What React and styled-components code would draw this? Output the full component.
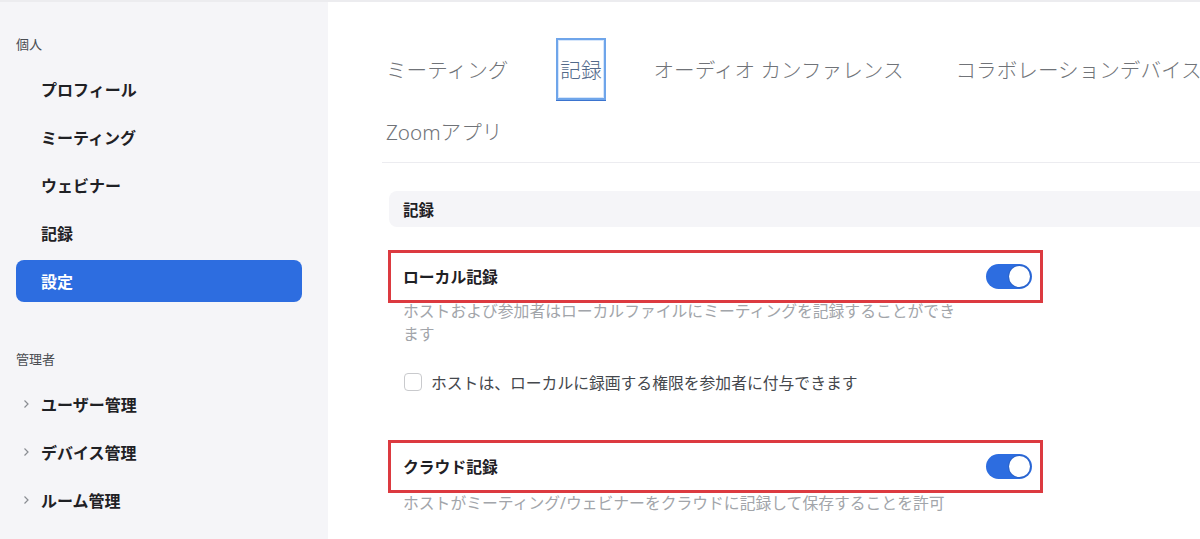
import React from "react";
import styled, { createGlobalStyle } from "styled-components";

const Global = createGlobalStyle`
  html, body { margin: 0; padding: 0; background: #ffffff; }
  body {
    font-family: "Noto Sans", "Noto Sans CJK JP", sans-serif;
    -webkit-font-smoothing: antialiased;
  }
  * { box-sizing: border-box; }
`;

const Page = styled.div`
  display: flex;
  height: 539px;
  border-top: 2px solid #ececef;
  overflow: hidden;
  font-family: "Noto Sans", "Noto Sans CJK JP", sans-serif;
`;

const Sidebar = styled.aside`
  width: 328px;
  flex-shrink: 0;
  background: #f5f5f8;
  padding: 32px 26px 0 16px;
`;

const GroupLabel = styled.div`
  font-size: 13px;
  line-height: 20px;
  color: #4a4d52;
  margin: ${(p) => (p.$spaced ? "47px" : "0")} 0 14px 0;
`;

const NavList = styled.nav`
  display: flex;
  flex-direction: column;
  gap: 6px;
`;

const NavItem = styled.div`
  height: 42px;
  display: flex;
  align-items: center;
  gap: 11px;
  padding-left: ${(p) => (p.$expand ? "6px" : "25px")};
  border-radius: 8px;
  font-size: 16px;
  font-weight: 700;
  color: ${(p) => (p.$active ? "#ffffff" : "#1f2125")};
  background: ${(p) => (p.$active ? "#2d6de0" : "transparent")};
`;

const Chevron = () => (
  <svg width="8" height="10" viewBox="0 0 8 10" fill="none">
    <path d="M2.5 1.5 L6 5 L2.5 8.5" stroke="#8a8d92" strokeWidth="1.2" />
  </svg>
);

const Main = styled.main`
  flex: 1;
  min-width: 0;
  overflow: hidden;
  background: #ffffff;
  padding-left: 54px;
`;

const Content = styled.div`
  width: 880px;
`;

const TabBar = styled.div`
  display: flex;
  flex-wrap: wrap;
  column-gap: 44px;
  padding-top: 36px;
  border-bottom: 1px solid #ececf0;
`;

const Tab = styled.div`
  height: 62px;
  display: flex;
  align-items: center;
  padding: 0 2px;
  border: 2px solid ${(p) => (p.$active ? "#6fa5ea" : "transparent")};
  box-shadow: ${(p) =>
    p.$active ? "inset 0 0 0 1px #d6e6fb, 0 1px 0 #3b74cf" : "none"};
  font-size: 20.6px;
  font-weight: 300;
  white-space: nowrap;
  color: ${(p) => (p.$active ? "#52698a" : "#707378")};
`;

const SectionHeader = styled.div`
  margin: 28px 0 0 7px;
  height: 36px;
  display: flex;
  align-items: center;
  padding-left: 14px;
  background: #f5f5f8;
  border-radius: 8px 0 0 8px;
  font-size: 15.5px;
  font-weight: 700;
  color: #1f2125;
`;

const Setting = styled.section`
  margin: ${(p) => p.$top} 0 0 6px;
`;

const Highlight = styled.div`
  width: 655px;
  height: 53px;
  border: 3px solid #dc3a40;
  display: flex;
  align-items: center;
  justify-content: space-between;
  padding: 0 8px 0 12px;
`;

const SettingTitle = styled.div`
  font-size: 15.8px;
  font-weight: 700;
  color: #1f2125;
`;

const Toggle = styled.div`
  width: 46px;
  height: 25px;
  border-radius: 13px;
  background: #2d6de0;
  display: flex;
  align-items: center;
  justify-content: flex-end;
  padding: 0 2px;
`;

const Knob = styled.span`
  width: 21px;
  height: 21px;
  border-radius: 50%;
  background: #ffffff;
  box-shadow: 0 0 0 1px #2a62c8;
`;

const Description = styled.p`
  margin: ${(p) => p.$top} 0 0 0;
  padding-left: 15px;
  width: 578px;
  font-size: 15.8px;
  line-height: 23px;
  color: #a2a5aa;
`;

const CheckRow = styled.label`
  margin-top: 25px;
  padding-left: 16px;
  height: 22px;
  display: flex;
  align-items: center;
  gap: 9px;
  font-size: 15.8px;
  color: #45484d;
`;

const CheckBox = styled.span`
  width: 18px;
  height: 18px;
  border: 1px solid #c9cacd;
  border-radius: 4px;
  background: #ffffff;
`;

const tabs = [
  "ミーティング",
  "記録",
  "オーディオ カンファレンス",
  "コラボレーションデバイス",
  "Zoomアプリ",
];

export default function App() {
  return (
    <>
      <Global />
      <Page>
        <Sidebar>
          <GroupLabel>個人</GroupLabel>
          <NavList>
            <NavItem>プロフィール</NavItem>
            <NavItem>ミーティング</NavItem>
            <NavItem>ウェビナー</NavItem>
            <NavItem>記録</NavItem>
            <NavItem $active>設定</NavItem>
          </NavList>
          <GroupLabel $spaced>管理者</GroupLabel>
          <NavList>
            {["ユーザー管理", "デバイス管理", "ルーム管理"].map((t) => (
              <NavItem $expand key={t}>
                <Chevron />
                {t}
              </NavItem>
            ))}
          </NavList>
        </Sidebar>
        <Main>
          <Content>
            <TabBar>
              {tabs.map((t) => (
                <Tab key={t} $active={t === "記録"}>
                  {t}
                </Tab>
              ))}
            </TabBar>
            <SectionHeader>記録</SectionHeader>
            <Setting $top="23px">
              <Highlight>
                <SettingTitle>ローカル記録</SettingTitle>
                <Toggle>
                  <Knob />
                </Toggle>
              </Highlight>
              <Description $top="-3px">
                ホストおよび参加者はローカルファイルにミーティングを記録することができます
              </Description>
              <CheckRow>
                <CheckBox />
                ホストは、ローカルに録画する権限を参加者に付与できます
              </CheckRow>
            </Setting>
            <Setting $top="47px">
              <Highlight>
                <SettingTitle>クラウド記録</SettingTitle>
                <Toggle>
                  <Knob />
                </Toggle>
              </Highlight>
              <Description $top="-1px">
                ホストがミーティング/ウェビナーをクラウドに記録して保存することを許可
              </Description>
            </Setting>
          </Content>
        </Main>
      </Page>
    </>
  );
}
